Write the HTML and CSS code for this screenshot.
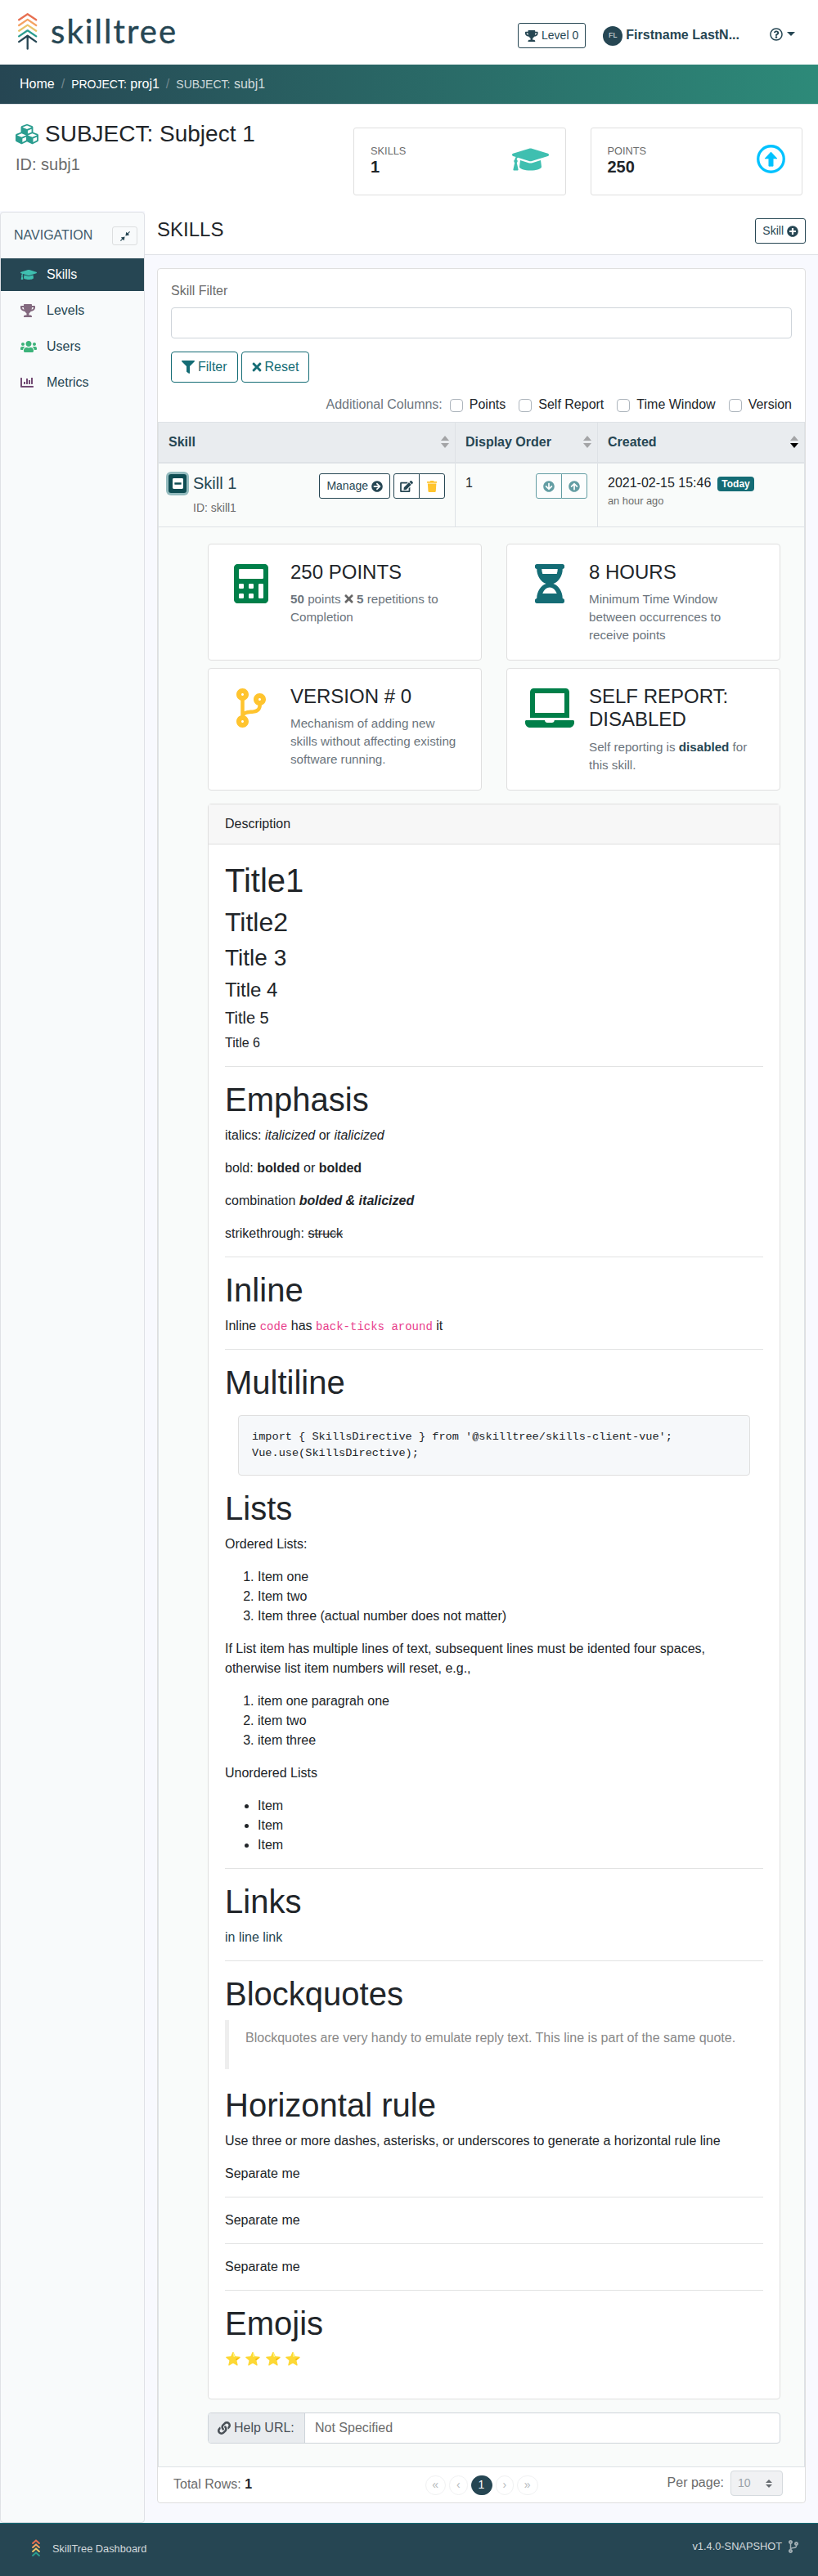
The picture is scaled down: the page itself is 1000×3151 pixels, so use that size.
FILE: index.html
```html
<!DOCTYPE html>
<html lang="en">
<head>
<meta charset="utf-8">
<title>SkillTree Dashboard</title>
<link rel="stylesheet" href="styles.css">
</head>
<body>
<svg class="sprite" width="0" height="0" aria-hidden="true">
  <symbol id="trophy" viewBox="0 0 576 512"><path d="M552 64H448V24c0-13.300-10.700-24-24-24H152c-13.300 0-24 10.700-24 24v40H24C10.700 64 0 74.700 0 88v56c0 35.700 22.500 72.400 61.900 100.700 31.500 22.700 69.800 37.100 110 41.700C203.300 338.500 240 360 240 360v72h-48c-35.300 0-64 20.700-64 56v12c0 6.600 5.400 12 12 12h296c6.600 0 12-5.400 12-12v-12c0-35.300-28.700-56-64-56h-48v-72s36.700-21.500 68.100-73.600c40.300-4.600 78.600-19 110-41.700 39.300-28.300 61.900-65 61.900-100.700V88c0-13.300-10.700-24-24-24zM99.300 192.800C74.900 175.200 64 155.600 64 144v-16h64.200c1 32.600 5.800 61.200 12.800 86.200-15.100-5.200-29.200-12.400-41.700-21.400zM512 144c0 16.100-17.700 36.100-35.300 48.800-12.500 9-26.700 16.200-41.800 21.400 7-25 11.800-53.600 12.800-86.200H512v16z"/></symbol>
  <symbol id="cap" viewBox="0 0 640 512"><path d="M622.340 153.200L343.400 67.500c-15.200-4.670-31.600-4.670-46.790 0L17.660 153.200c-23.540 7.230-23.540 38.360 0 45.590l48.630 14.940c-10.670 13.190-17.230 29.280-17.880 46.900C38.780 266.150 32 276.110 32 288c0 10.780 5.680 19.850 13.860 25.650L20.330 428.530C18.110 438.520 25.710 448 35.940 448h56.110c10.240 0 17.840-9.480 15.620-19.470L82.140 313.650C90.320 307.850 96 298.780 96 288c0-11.570-6.470-21.250-15.660-26.870.76-15.020 8.440-28.300 20.690-36.720L296.600 284.500c9.060 2.780 26.440 6.250 46.790 0l278.950-85.700c23.550-7.240 23.550-38.360 0-45.600zM352.790 315.090c-28.530 8.760-52.840 3.920-65.590 0l-145.020-44.550L128 384c0 35.350 85.960 64 192 64s192-28.650 192-64l-14.180-113.470-145.030 44.560z"/></symbol>
  <symbol id="users" viewBox="0 0 640 512"><path d="M96 224c35.300 0 64-28.700 64-64s-28.700-64-64-64-64 28.700-64 64 28.700 64 64 64zm448 0c35.300 0 64-28.700 64-64s-28.700-64-64-64-64 28.700-64 64 28.700 64 64 64zm32 32h-64c-17.600 0-33.500 7.100-45.100 18.600 40.300 22.100 68.900 62 75.100 109.400h66c17.700 0 32-14.300 32-32v-32c0-35.300-28.700-64-64-64zm-256 0c61.900 0 112-50.100 112-112S381.900 32 320 32 208 82.100 208 144s50.100 112 112 112zm76.800 32h-8.300c-20.800 10-43.900 16-68.500 16s-47.600-6-68.500-16h-8.300C179.600 288 128 339.600 128 403.200V432c0 26.500 21.500 48 48 48h288c26.500 0 48-21.500 48-48v-28.800c0-63.600-51.600-115.200-115.200-115.200zm-223.700-13.400C161.500 263.100 145.600 256 128 256H64c-35.300 0-64 28.700-64 64v32c0 17.700 14.300 32 32 32h65.900c6.300-47.400 34.900-87.300 75.200-109.400z"/></symbol>
  <symbol id="chart" viewBox="0 0 512 512"><path d="M332.800 320h38.400c6.400 0 12.800-6.400 12.800-12.800V172.800c0-6.400-6.400-12.800-12.800-12.800h-38.400c-6.400 0-12.800 6.400-12.800 12.800v134.400c0 6.400 6.400 12.800 12.800 12.800zm96 0h38.400c6.400 0 12.800-6.400 12.800-12.800V76.800c0-6.400-6.400-12.800-12.800-12.800h-38.400c-6.400 0-12.800 6.400-12.800 12.800v230.400c0 6.400 6.400 12.800 12.800 12.800zm-288 0h38.400c6.400 0 12.800-6.400 12.800-12.800v-70.400c0-6.400-6.400-12.800-12.800-12.800h-38.400c-6.400 0-12.800 6.400-12.800 12.800v70.400c0 6.400 6.400 12.800 12.800 12.800zm96 0h38.400c6.400 0 12.800-6.400 12.800-12.800V108.800c0-6.400-6.400-12.800-12.800-12.800h-38.400c-6.400 0-12.800 6.400-12.800 12.800v198.400c0 6.400 6.400 12.800 12.800 12.800zM496 384H64V80c0-8.840-7.160-16-16-16H16C7.160 64 0 71.160 0 80v336c0 17.670 14.330 32 32 32h464c8.840 0 16-7.160 16-16v-32c0-8.840-7.160-16-16-16z"/></symbol>
  <symbol id="filter" viewBox="0 0 512 512"><path d="M487.976 0H24.028C2.710 0-8.047 25.866 7.058 40.971L192 225.941V432c0 7.831 3.821 15.170 10.237 19.662l80 55.980C298.020 518.690 320 507.493 320 487.980V225.941l184.947-184.970C520.021 25.896 509.338 0 487.976 0z"/></symbol>
  <symbol id="times" viewBox="0 0 352 512"><path d="M242.720 256l100.070-100.070c12.280-12.280 12.280-32.190 0-44.480l-22.240-22.240c-12.280-12.280-32.190-12.280-44.480 0L176 189.280 75.930 89.210c-12.280-12.280-32.190-12.280-44.480 0L9.210 111.450c-12.280 12.280-12.280 32.190 0 44.480L109.280 256 9.210 356.070c-12.280 12.280-12.280 32.190 0 44.480l22.240 22.240c12.280 12.280 32.200 12.280 44.480 0L176 322.720l100.070 100.070c12.280 12.280 32.200 12.280 44.480 0l22.240-22.240c12.280-12.280 12.280-32.190 0-44.480L242.720 256z"/></symbol>
  <symbol id="question" viewBox="0 0 512 512"><path d="M256 8C119.043 8 8 119.083 8 256c0 136.997 111.043 248 248 248s248-111.003 248-248C504 119.083 392.957 8 256 8zm0 448c-110.532 0-200-89.431-200-200 0-110.495 89.472-200 200-200 110.491 0 200 89.471 200 200 0 110.530-89.431 200-200 200zm107.244-255.200c0 67.052-72.421 68.084-72.421 92.863V300c0 6.627-5.373 12-12 12h-45.647c-6.627 0-12-5.373-12-12v-8.659c0-35.745 27.100-50.034 47.579-61.516 17.561-9.845 28.324-16.541 28.324-29.579 0-17.246-21.999-28.693-39.784-28.693-23.189 0-33.894 10.977-48.942 29.969-4.057 5.120-11.460 6.071-16.666 2.124l-27.824-21.098c-5.107-3.872-6.251-11.066-2.644-16.363C184.846 131.491 214.940 112 261.794 112c49.071 0 101.450 38.304 101.450 88.800zM298 368c0 23.159-18.841 42-42 42s-42-18.841-42-42 18.841-42 42-42 42 18.841 42 42z"/></symbol>
  <symbol id="plus" viewBox="0 0 512 512"><path d="M256 8C119 8 8 119 8 256s111 248 248 248 248-111 248-248S393 8 256 8zm144 276c0 6.600-5.400 12-12 12h-92v92c0 6.600-5.400 12-12 12h-56c-6.600 0-12-5.400-12-12v-92h-92c-6.600 0-12-5.400-12-12v-56c0-6.600 5.400-12 12-12h92v-92c0-6.600 5.400-12 12-12h56c6.600 0 12 5.400 12 12v92h92c6.600 0 12 5.400 12 12v56z"/></symbol>
  <symbol id="arrow" viewBox="0 0 512 512"><path d="M256 8c137 0 248 111 248 248S393 504 256 504 8 393 8 256 119 8 256 8zm-28.900 143.600l75.500 72.400H120c-13.300 0-24 10.700-24 24v16c0 13.300 10.700 24 24 24h182.600l-75.500 72.400c-9.700 9.300-9.900 24.800-.4 34.300l11 10.900c9.400 9.400 24.600 9.400 33.900 0L404.300 273c9.400-9.400 9.400-24.600 0-33.900L271.600 106.300c-9.400-9.400-24.600-9.400-33.900 0l-11 10.900c-9.500 9.600-9.300 25.100.4 34.400z"/></symbol>
  <symbol id="edit" viewBox="0 0 576 512"><path d="M402.600 83.200l90.200 90.200c3.800 3.800 3.800 10 0 13.800L274.400 405.600l-92.800 10.300c-12.400 1.400-22.900-9.100-21.500-21.500l10.300-92.800L388.800 83.200c3.800-3.800 10-3.800 13.800 0zm162-22.900l-48.800-48.800c-15.200-15.200-39.900-15.200-55.200 0l-35.400 35.400c-3.800 3.800-3.800 10 0 13.800l90.200 90.200c3.800 3.800 10 3.800 13.800 0l35.400-35.400c15.200-15.300 15.200-40 0-55.200zM384 346.200V448H64V128h229.800c3.200 0 6.200-1.300 8.500-3.500l40-40c7.600-7.600 2.200-20.500-8.500-20.500H48C21.500 64 0 85.500 0 112v352c0 26.500 21.500 48 48 48h352c26.500 0 48-21.500 48-48V306.200c0-10.700-12.900-16-20.500-8.500l-40 40c-2.200 2.300-3.500 5.300-3.500 8.500z"/></symbol>
  <symbol id="trash" viewBox="0 0 448 512"><path d="M432 32H312l-9.400-18.700A24 24 0 0 0 281.100 0H166.800a23.720 23.720 0 0 0-21.400 13.300L136 32H16A16 16 0 0 0 0 48v32a16 16 0 0 0 16 16h416a16 16 0 0 0 16-16V48a16 16 0 0 0-16-16zM53.200 467a48 48 0 0 0 47.900 45h245.800a48 48 0 0 0 47.900-45L416 128H32z"/></symbol>
  <symbol id="minus" viewBox="0 0 448 512"><path d="M400 32H48C21.500 32 0 53.500 0 80v352c0 26.500 21.500 48 48 48h352c26.500 0 48-21.500 48-48V80c0-26.500-21.500-48-48-48zM92 296c-6.600 0-12-5.400-12-12v-56c0-6.600 5.400-12 12-12h264c6.600 0 12 5.400 12 12v56c0 6.600-5.400 12-12 12H92z"/></symbol>
  <symbol id="calculator" viewBox="0 0 448 512"><path fill-rule="evenodd" d="M400 0H48C22.400 0 0 22.400 0 48v416c0 25.600 22.400 48 48 48h352c25.600 0 48-22.400 48-48V48c0-25.600-22.400-48-48-48zM77 64h294q13 0 13 13v102q0 13-13 13H77q-13 0-13-13V77q0-13 13-13zM77 256h38q13 0 13 13v38q0 13-13 13H77q-13 0-13-13v-38q0-13 13-13zM205 256h38q13 0 13 13v38q0 13-13 13h-38q-13 0-13-13v-38q0-13 13-13zM77 384h38q13 0 13 13v38q0 13-13 13H77q-13 0-13-13v-38q0-13 13-13zM205 384h38q13 0 13 13v38q0 13-13 13h-38q-13 0-13-13v-38q0-13 13-13zM333 256h38q13 0 13 13v166q0 13-13 13h-38q-13 0-13-13V269q0-13 13-13z"/></symbol>
  <symbol id="hourglass" viewBox="0 0 384 512"><path d="M360 0H24C10.745 0 0 10.745 0 24v16c0 13.255 10.745 24 24 24 0 90.965 51.016 167.734 120.842 192C75.016 280.266 24 357.035 24 448c-13.255 0-24 10.745-24 24v16c0 13.255 10.745 24 24 24h336c13.255 0 24-10.745 24-24v-16c0-13.255-10.745-24-24-24 0-90.965-51.016-167.734-120.842-192C308.984 231.734 360 154.965 360 64c13.255 0 24-10.745 24-24V24c0-13.255-10.745-24-24-24zm-75.078 384H99.080c17.059-46.797 52.096-80 92.920-80 40.821 0 75.862 33.196 92.922 80zm.019-256H99.078C91.988 108.548 88 86.748 88 64h208c0 22.805-3.987 44.587-11.059 64z"/></symbol>
  <symbol id="branch" viewBox="0 0 384 512"><path d="M384 144c0-44.200-35.800-80-80-80s-80 35.800-80 80c0 36.400 24.300 67.100 57.500 76.800-.6 16.100-4.200 28.500-11 36.900-15.400 19.200-49.300 22.400-85.200 25.700-28.200 2.600-57.400 5.400-81.300 16.900v-144c32.500-10.200 56-40.500 56-76.300 0-44.200-35.800-80-80-80S0 35.800 0 80c0 35.800 23.500 66.100 56 76.300v199.300C23.500 365.900 0 396.200 0 432c0 44.200 35.800 80 80 80s80-35.800 80-80c0-34-21.200-63.100-51.200-74.600 3.100-5.200 7.800-9.800 14.900-13.400 16.200-8.200 40.400-10.400 66.100-12.800 42.200-3.900 90-8.400 118.200-43.400 14-17.400 21.100-39.800 21.600-67.900 31.600-10.800 54.400-40.700 54.400-75.900zM80 64c8.800 0 16 7.200 16 16s-7.200 16-16 16-16-7.200-16-16 7.200-16 16-16zm0 384c-8.800 0-16-7.200-16-16s7.200-16 16-16 16 7.200 16 16-7.200 16-16 16zm224-320c8.800 0 16 7.200 16 16s-7.200 16-16 16-16-7.200-16-16 7.200-16 16-16z"/></symbol>
  <symbol id="laptop" viewBox="0 0 640 512"><path d="M624 416H381.540c-.74 19.810-14.710 32-32.740 32H288c-18.690 0-33.020-17.470-32.770-32H16c-8.800 0-16 7.200-16 16v16c0 35.200 28.800 64 64 64h512c35.200 0 64-28.800 64-64v-16c0-8.800-7.200-16-16-16zM576 48c0-26.400-21.600-48-48-48H112C85.600 0 64 21.600 64 48v336h512V48zm-64 272H128V64h384v256z"/></symbol>
  <symbol id="link" viewBox="0 0 512 512"><path d="M326.612 185.391c59.747 59.809 58.927 155.698.36 214.590-.11.12-.24.25-.36.37l-67.200 67.200c-59.270 59.270-155.699 59.262-214.960 0-59.270-59.260-59.270-155.700 0-214.960l37.106-37.106c9.840-9.840 26.786-3.300 27.294 10.606.648 17.722 3.826 35.527 9.690 52.721 1.986 5.822.567 12.262-3.783 16.612l-13.087 13.087c-28.026 28.026-28.905 73.660-1.155 101.960 28.024 28.579 74.086 28.749 102.325.51l67.200-67.190c28.191-28.191 28.073-73.757 0-101.830-3.701-3.694-7.429-6.564-10.341-8.569a16.037 16.037 0 0 1-6.947-12.606c-.396-10.567 3.348-21.456 11.698-29.806l21.054-21.055c5.521-5.521 14.182-6.199 20.584-1.731a152.482 152.482 0 0 1 20.522 17.197zM467.547 44.449c-59.261-59.262-155.690-59.270-214.960 0l-67.200 67.200c-.12.12-.25.25-.36.37-58.566 58.892-59.387 154.781.36 214.590a152.454 152.454 0 0 0 20.521 17.196c6.402 4.468 15.064 3.789 20.584-1.731l21.054-21.055c8.350-8.350 12.094-19.239 11.698-29.806a16.037 16.037 0 0 0-6.947-12.606c-2.912-2.005-6.640-4.875-10.341-8.569-28.073-28.073-28.191-73.639 0-101.830l67.200-67.190c28.239-28.239 74.300-28.069 102.325.51 27.750 28.300 26.872 73.934-1.155 101.960l-13.087 13.087c-4.350 4.350-5.769 10.790-3.783 16.612 5.864 17.194 9.042 34.999 9.690 52.721.509 13.906 17.454 20.446 27.294 10.606l37.106-37.106c59.271-59.259 59.271-155.699.001-214.959z"/></symbol>
  <symbol id="cubes" viewBox="0 0 512 512"><path d="M488.600 250.200L392 214V105.500c0-15-9.300-28.400-23.400-33.700l-100-37.500c-8.100-3.100-17.100-3.100-25.300 0l-100 37.500c-14.100 5.300-23.400 18.700-23.400 33.700V214l-96.600 36.200C9.300 255.500 0 268.900 0 283.900V394c0 13.600 7.700 26.100 19.900 32.200l100 50c10.100 5.100 22.100 5.100 32.200 0l103.900-52 103.900 52c10.100 5.100 22.100 5.100 32.200 0l100-50c12.200-6.100 19.900-18.600 19.900-32.200V283.900c0-15-9.300-28.400-23.400-33.700zM358 214.800l-85 31.900v-68.200l85-37v73.300zM154 104.100l102-38.200 102 38.200v.6l-102 41.400-102-41.400v-.6zm84 291.100l-85 42.500v-79.100l85-38.800v75.400zm0-112l-102 41.400-102-41.400v-.6l102-38.200 102 38.200v.6zm240 112l-85 42.500v-79.100l85-38.800v75.400zm0-112l-102 41.400-102-41.400v-.6l102-38.200 102 38.200v.6z"/></symbol>
  <symbol id="up-circle" viewBox="0 0 34 34"><circle cx="17" cy="17" r="15.300" fill="none" stroke="currentColor" stroke-width="3.200"/><path d="M17 8.800l7.200 7.600h-4.700v9h-5v-9H9.800z" stroke="currentColor" stroke-width=".8" stroke-linejoin="round"/></symbol>
  <symbol id="compress" viewBox="0 0 12 12"><path d="M11.200 0l.8.8L9.800 3l1.400 1.600-4.800.9.900-4.700L9 2.200zM.8 12l-.8-.8L2.200 9 .8 7.400l4.800-.9-.9 4.700L3 9.800z"/></symbol>
  <symbol id="tree" viewBox="0 0 24 46"><g fill="none" stroke-width="2.300" stroke-linecap="round" stroke-linejoin="round"><path stroke="#e76f51" d="M1.200 8.300L11.700 1.200l10.500 7.100"/><path stroke="#f4a261" d="M1.200 15L11.700 7.900 22.200 15"/><path stroke="#e9c46a" d="M1.200 21.700l10.500-7.100 10.500 7.100"/><path stroke="#2a9d8f" d="M1.200 28.400l10.500-7.100 10.500 7.100"/><path stroke="#264653" d="M1.200 35.100l10.500-7.400 10.500 7.400M11.700 28v15.700"/></g></symbol>
  <symbol id="tree-small" viewBox="0 0 10 22"><g fill="none" stroke-width="2" stroke-linecap="round" stroke-linejoin="round"><path stroke="#e76f51" d="M1.100 5L5 1.400 8.900 5"/><path stroke="#f4a261" d="M1.100 10L5 6.400 8.900 10"/><path stroke="#e9c46a" d="M1.100 15L5 11.400 8.900 15"/><path stroke="#2a9d8f" d="M1.100 20L5 16.400 8.900 20"/></g></symbol>
</svg>

<header class="topbar">
  <div class="brand">
    <svg class="brand-tree"><use href="#tree"/></svg>
    <svg class="brand-name" width="156" height="50"><text x="0" y="37.300" textLength="153">skilltree</text></svg>
  </div>
  <div class="btn btn-sm level"><svg class="i trophy-sm"><use href="#trophy"/></svg>Level 0</div>
  <div class="user"><span class="avatar">FL</span><b>Firstname LastN...</b></div>
  <div class="help"><svg class="i w16"><use href="#question"/></svg><span class="caret"></span></div>
</header>
<nav class="crumbs">
  <span>Home</span><i>/</i><span><small>PROJECT:</small> proj1</span><i>/</i><span class="current"><small>SUBJECT:</small> subj1</span>
</nav>

<section class="subject">
  <div class="subject-name">
    <h2><svg class="cubes"><use href="#cubes"/></svg>SUBJECT: Subject 1</h2>
    <p>ID: subj1</p>
  </div>
  <div class="stat"><div><small>SKILLS</small><b>1</b></div><svg class="stat-cap"><use href="#cap"/></svg></div>
  <div class="stat"><div><small>POINTS</small><b>250</b></div><svg class="stat-up"><use href="#up-circle"/></svg></div>
</section>

<div class="layout">
  <aside class="sidebar">
    <div class="side-head"><span>NAVIGATION</span><span class="collapse"><svg><use href="#compress"/></svg></span></div>
    <ul class="menu">
      <li class="active"><svg class="i w20 c-teal"><use href="#cap"/></svg><span>Skills</span></li>
      <li><svg class="i w18 c-mauve"><use href="#trophy"/></svg><span>Levels</span></li>
      <li><svg class="i w20 c-green"><use href="#users"/></svg><span>Users</span></li>
      <li><svg class="i w16 c-plum"><use href="#chart"/></svg><span>Metrics</span></li>
    </ul>
  </aside>

  <main class="content">
    <div class="title-bar"><h4>SKILLS</h4><div class="btn btn-sm">Skill<svg class="i w14"><use href="#plus"/></svg></div></div>

    <div class="panel">
      <div class="filters">
        <label>Skill Filter</label>
        <div class="input"></div>
        <div class="filter-buttons">
          <div class="btn btn-teal"><svg class="i w16"><use href="#filter"/></svg>Filter</div>
          <div class="btn btn-teal"><svg class="i w12"><use href="#times"/></svg>Reset</div>
        </div>
        <div class="columns">
          <span class="muted">Additional Columns:</span>
          <span class="check"><i></i>Points</span>
          <span class="check"><i></i>Self Report</span>
          <span class="check"><i></i>Time Window</span>
          <span class="check"><i></i>Version</span>
        </div>
      </div>

      <div class="table">
        <div class="tr head">
          <div class="td"><b>Skill</b><span class="sort"></span></div>
          <div class="td"><b>Display Order</b><span class="sort"></span></div>
          <div class="td"><b>Created</b><span class="sort desc"></span></div>
        </div>
        <div class="tr">
          <div class="td">
            <div class="skill">
              <span class="toggle"><svg class="i"><use href="#minus"/></svg></span>
              <div><h5>Skill 1</h5><small>ID: skill1</small></div>
            </div>
            <div class="actions">
              <div class="btn btn-sm">Manage<svg class="i w14"><use href="#arrow"/></svg></div>
              <div class="group">
                <div class="btn btn-sm"><svg class="i w16"><use href="#edit"/></svg></div>
                <div class="btn btn-sm"><svg class="i w13 c-amber"><use href="#trash"/></svg></div>
              </div>
            </div>
          </div>
          <div class="td">
            <span>1</span>
            <div class="group order">
              <div class="btn btn-sm btn-teal"><svg class="i w14 down"><use href="#arrow"/></svg></div>
              <div class="btn btn-sm btn-teal"><svg class="i w14 up"><use href="#arrow"/></svg></div>
            </div>
          </div>
          <div class="td">
            <div class="created"><span>2021-02-15 15:46</span><em>Today</em><small>an hour ago</small></div>
          </div>
        </div>

        <div class="detail">
          <div class="cards">
            <div class="card"><div class="card-icon"><svg class="big w42 c-forest"><use href="#calculator"/></svg></div><div><h4>250 POINTS</h4><p><b>50</b> points <svg class="i w11"><use href="#times"/></svg> <b>5</b> repetitions to Completion</p></div></div>
            <div class="card"><div class="card-icon"><svg class="big w36 c-deep"><use href="#hourglass"/></svg></div><div><h4>8 HOURS</h4><p>Minimum Time Window between occurrences to receive points</p></div></div>
            <div class="card"><div class="card-icon"><svg class="big w36 c-amber"><use href="#branch"/></svg></div><div><h4>VERSION # 0</h4><p>Mechanism of adding new skills without affecting existing software running.</p></div></div>
            <div class="card"><div class="card-icon"><svg class="big w60 c-forest"><use href="#laptop"/></svg></div><div><h4>SELF REPORT: DISABLED</h4><p>Self reporting is <b class="navy">disabled</b> for this skill.</p></div></div>
          </div>

          <article class="description">
            <div class="description-head">Description</div>
            <div class="markdown">
              <h1>Title1</h1>
              <h2>Title2</h2>
              <h3>Title 3</h3>
              <h4>Title 4</h4>
              <h5>Title 5</h5>
              <h6>Title 6</h6>
              <hr>
              <h1>Emphasis</h1>
              <p>italics: <em>italicized</em> or <em>italicized</em></p>
              <p>bold: <strong>bolded</strong> or <strong>bolded</strong></p>
              <p>combination <strong><em>bolded &amp; italicized</em></strong></p>
              <p>strikethrough: <del>struck</del></p>
              <hr>
              <h1>Inline</h1>
              <p>Inline <code>code</code> has <code>back-ticks around</code> it</p>
              <hr>
              <h1>Multiline</h1>
              <pre>import { SkillsDirective } from '@skilltree/skills-client-vue';
Vue.use(SkillsDirective);</pre>
              <h1>Lists</h1>
              <p>Ordered Lists:</p>
              <ol><li>Item one</li><li>Item two</li><li>Item three (actual number does not matter)</li></ol>
              <p>If List item has multiple lines of text, subsequent lines must be idented four spaces, otherwise list item numbers will reset, e.g.,</p>
              <ol><li>item one paragrah one</li><li>item two</li><li>item three</li></ol>
              <p>Unordered Lists</p>
              <ul><li>Item</li><li>Item</li><li>Item</li></ul>
              <hr>
              <h1>Links</h1>
              <p><a>in line link</a></p>
              <hr>
              <h1>Blockquotes</h1>
              <blockquote><p>Blockquotes are very handy to emulate reply text. This line is part of the same quote.</p></blockquote>
              <h1>Horizontal rule</h1>
              <p>Use three or more dashes, asterisks, or underscores to generate a horizontal rule line</p>
              <p>Separate me</p>
              <hr>
              <p>Separate me</p>
              <hr>
              <p>Separate me</p>
              <hr>
              <h1>Emojis</h1>
              <p>⭐ ⭐ ⭐ ⭐</p>
            </div>
          </article>

          <div class="help-url"><span class="addon"><svg class="i w16"><use href="#link"/></svg>Help URL:</span><span class="value">Not Specified</span></div>
        </div>
      </div>

      <div class="pager">
        <div class="total">Total Rows: <b>1</b></div>
        <div class="pages"><span class="wide">«</span><span>‹</span><span class="on">1</span><span>›</span><span class="wide">»</span></div>
        <div class="per-page"><span>Per page:</span><span class="select">10<svg width="8" height="10" viewBox="0 0 8 10"><path d="M4 0l4 4H0zM0 6h8l-4 4z"/></svg></span></div>
      </div>
    </div>
  </main>
</div>

<footer class="footer">
  <div><svg class="footer-tree"><use href="#tree-small"/></svg>SkillTree Dashboard</div>
  <div class="version">v1.4.0-SNAPSHOT<svg class="i w12"><use href="#branch"/></svg></div>
</footer>
</body>
</html>
```
FILE: styles.css
```css
*, *::before, *::after { box-sizing: border-box; }
body {
  margin: 0;
  background: #fff;
  color: #212529;
  font: 16px/1.5 "Liberation Sans", Arial, sans-serif;
}
h1, h2, h3, h4, h5, h6 { margin: 0 0 8px; font-weight: 400; line-height: 1.2; }
h1 { font-size: 40px; }
h2 { font-size: 32px; }
h3 { font-size: 28px; }
h4 { font-size: 24px; }
h5 { font-size: 20px; }
h6 { font-size: 16px; }
p { margin: 0 0 16px; }
svg { fill: currentColor; flex: none; }
.sprite { display: block; }

/* icons */
.i { height: 16px; vertical-align: -2px; }
.w11 { width: 11px; }
.w12 { width: 12px; }
.w13 { width: 12.250px; }
.w14 { width: 14px; }
.w16 { width: 16px; }
.w18 { width: 18px; }
.w20 { width: 20px; }
.big { height: 48px; }
.w36 { width: 36px; }
.w42 { width: 42px; }
.w60 { width: 60px; }
.down { transform: rotate(90deg); }
.up { transform: rotate(-90deg); }
.c-teal { color: #3fbfb0; }
.c-mauve { color: #83697f; }
.c-green { color: #3cb37a; }
.c-plum { color: #714a73; }
.c-amber { color: #ffc42e; }
.c-forest { color: #007f49; }
.c-deep { color: #146c75; }
.navy { color: #264653; }
.muted { color: #6c757d; }

/* buttons */
.btn {
  display: flex;
  flex: none;
  align-items: center;
  gap: 4px;
  height: 38px;
  padding: 0 12px;
  border: 1px solid #264653;
  border-radius: 4px;
  background: #fff;
  color: #264653;
  white-space: nowrap;
}
.btn-sm { height: 31px; padding: 0 8px; border-radius: 3px; font-size: 14px; }
.btn-sm .i { height: 14px; }
.btn-teal { border-color: #146c75; color: #146c75; }
.group { display: flex; }
.group .btn:first-child { border-radius: 3px 0 0 3px; }
.group .btn:last-child { margin-left: -1px; border-radius: 0 3px 3px 0; }

/* header */
.topbar { display: flex; align-items: center; height: 79px; padding: 8px 28px 0 22px; color: #264653; }
.brand { display: flex; align-items: flex-start; align-self: flex-start; margin: 8px auto 0 0; }
.brand-tree { width: 24px; height: 46px; }
.brand-name {
  margin-left: 16px;
  overflow: visible;
  font: 40px Lato, sans-serif;
  stroke: currentColor;
  stroke-width: .4px;
  stroke-linejoin: round;
}
.level { width: 83px; }
.trophy-sm { width: 15.750px; }
.user { display: flex; align-items: center; gap: 4px; margin-left: 21px; white-space: nowrap; }
.user b { margin-top: -2px; }
.avatar {
  display: flex;
  align-items: center;
  justify-content: center;
  width: 24px;
  height: 24px;
  border-radius: 50%;
  background: #264653;
  color: #e0e5e7;
  font-size: 9px;
}
.help { display: flex; align-items: center; margin: -4px 0 0 37px; }
.caret { width: 0; margin-left: 5px; border: 5px solid transparent; border-top-color: currentColor; border-bottom: 0; }
.crumbs {
  display: flex;
  align-items: center;
  height: 49px;
  padding: 0 24px 1px;
  border-bottom: 1px solid #dee2e6;
  background: linear-gradient(90deg, #264653, #2d8a79);
  color: #fff;
}
.crumbs i { padding: 0 8px; color: #71868d; font-style: normal; }
.crumbs small { font-size: 14px; }
.crumbs .current { color: #d0dadb; }

/* subject summary */
.subject { display: flex; height: 130px; padding: 28px 19px 0; }
.subject-name { width: 413px; }
.subject-name h2 { display: flex; align-items: center; gap: 8px; margin: -9px 0 0; font-size: 28px; line-height: 34px; }
.cubes { width: 28px; height: 28px; color: #2a9d8f; }
.subject-name p { margin: 5px 0 0; color: #6c6c6c; font-size: 20px; line-height: 30px; }
.stat {
  display: flex;
  align-items: center;
  justify-content: space-between;
  flex: 1;
  height: 83px;
  padding: 0 20px;
  border: 1px solid #dfdfdf;
  border-radius: 3px;
}
.stat + .stat { margin-left: 30px; }
.stat > div { margin-top: -3px; }
.stat small { display: block; margin-top: -3px; color: #6c6c6c; font-size: 12.8px; line-height: 19px; }
.stat b { display: block; font-size: 20px; line-height: 20px; }
.stat-cap { width: 45px; height: 36px; margin-top: -6px; color: #3fbfb0; }
.stat-up { width: 35px; height: 35px; margin-top: -6px; color: #00c2ff; }

/* layout */
.layout { display: flex; height: 2828px; background: #f8f9fe; }
.sidebar { width: 177px; margin-top: 1px; border: 1px solid #dfe1e6; border-radius: 4px; background: #f8fafb; }
.side-head { display: flex; align-items: center; justify-content: space-between; height: 56px; padding: 1px 8px 0 16px; color: #3f5a6c; }
.side-head > span:first-child { margin-top: -1px; }
.collapse { display: flex; align-items: center; justify-content: center; width: 31px; height: 23px; border: 1px solid #dcdedf; border-radius: 3px; color: #264653; }
.collapse svg { width: 12px; height: 12px; }
.menu { margin: 0; padding: 0; list-style: none; color: #264653; }
.menu li { display: flex; align-items: center; height: 40px; margin-bottom: 4px; padding: 0 0 1px 24px; }
.menu .w20 { margin-right: 12px; }
.menu .w18 { margin-right: 14px; }
.menu .w16 { margin-right: 16px; }
.menu .active { background: #264653; color: #fff; }
.content { flex: 1; }
.title-bar { display: flex; align-items: center; justify-content: space-between; height: 54px; padding: 0 15px; border-bottom: 1px solid #dfe1e6; background: #fff; }
.title-bar h4 { margin: -7px 0 0; }
.title-bar .btn { margin-top: -4px; }
.panel { margin: 16px 15px 0; border: 1px solid #dfdfdf; border-radius: 4px; background: #fff; }

/* filters */
.filters { height: 187px; padding: 15px 16px 0; }
.filters label { display: block; color: #6c6c6c; line-height: 24px; }
.input { height: 38px; margin-top: 8px; border: 1px solid #ced4da; border-radius: 4px; }
.filter-buttons { display: flex; gap: 4px; margin-top: 16px; }
.columns { display: flex; align-items: center; justify-content: flex-end; margin-top: 15px; }
.check { display: flex; align-items: center; margin-left: 16px; }
.muted + .check { margin-left: 9px; }
.check i { width: 16px; height: 16px; margin: 2px 8px 0 0; border: 1px solid #adb5bd; border-radius: 4px; }

/* table */
.table { border: solid #dee2e6; border-width: 1px 1px 0 1px; background: #f9fbfa; }
.tr { display: grid; grid-template-columns: 363px 174px 1fr; height: 78px; border-bottom: 1px solid #dee2e6; }
.tr.head { height: 50px; border-bottom-width: 2px; background: #e9ecef; color: #264653; }
.td { display: flex; align-items: flex-start; justify-content: space-between; padding: 12px; border-right: 1px solid #dee2e6; }
.td:last-child { border-right: 0; }
.head .td { align-items: center; padding: 0 7px 1px 12px; }
.sort::before, .sort::after { content: ""; display: block; border: 5px solid transparent; }
.sort::before { border-top: 0; border-bottom: 6px solid #a3a4a6; }
.sort::after { margin-top: 3px; border-bottom: 0; border-top: 6px solid #a3a4a6; }
.sort.desc::after { border-top-color: #000; }
.skill { display: flex; gap: 8px; }
.toggle {
  display: flex;
  align-items: center;
  justify-content: center;
  width: 22px;
  height: 23px;
  margin-top: 1px;
  border-radius: 3px;
  background: #0f4d53;
  box-shadow: 0 0 0 3px #94bbbe;
  color: #fff;
}
.toggle .i { width: 13px; height: 15px; }
.skill h5 { margin: 0; color: #264653; font-size: 20px; line-height: 24px; }
.skill small { display: block; margin-top: 8px; color: #6c6c6c; font-size: 14px; line-height: 21px; }
.actions { display: flex; gap: 4px; }
.td .group .btn { justify-content: center; width: 32px; padding: 0; }
.order { opacity: .65; }
.created { line-height: 24px; }
.created em {
  display: inline-block;
  margin-left: 8px;
  padding: 0 5px;
  border-radius: 4px;
  background: #146c75;
  color: #fff;
  font: bold 12px/18px "Liberation Sans", Arial, sans-serif;
  vertical-align: 0;
}
.created small { display: block; color: #6c6c6c; font-size: 12.8px; line-height: 20px; }

/* expanded row */
.detail { height: 2373px; padding: 20px 29px 0 60px; border-bottom: 1px solid #dee2e6; }
.cards { display: grid; grid-template-columns: 1fr 1fr; gap: 9px 30px; grid-template-rows: 143px 150px; }
.card { display: flex; gap: 17px; padding: 19.500px 20px; border: 1px solid #dfdfdf; border-radius: 4px; background: #fff; }
.card-icon { display: flex; flex: none; align-items: flex-start; justify-content: center; width: 63px; padding-top: 4.500px; }
.card p { margin: 0; color: #6c757d; font-size: 15.200px; line-height: 22px; }
.card p .i { height: 15px; color: #666; }
.description { height: 1952px; margin-top: 16px; border: 1px solid #dfdfdf; border-radius: 4px; background: #fff; }
.description-head { height: 49px; padding: 12px 20px; border-bottom: 1px solid #dfdfdf; background: #f7f7f7; }
.markdown { padding: 20px; }
.markdown h5 { position: relative; top: -1px; }
.markdown h6 { margin-bottom: 19px; }
.markdown h6 + hr { margin-top: 0; }
hr { height: 1px; margin: 16px 0; border: 0; background: #e2e3e3; }
.markdown ol, .markdown ul { margin: 0 0 16px; padding-left: 40px; }
.markdown a { color: #264653; }
code { color: #e83e8c; font: 14px "Liberation Mono", monospace; }
pre { margin: 16px; padding: 16px 16px 17px; border: 1px solid #dfdfdf; border-radius: 4px; background: #f6f8fa; font: 13.600px/19.700px "Liberation Mono", monospace; }
blockquote { margin: 0 0 20px; padding: 10px 20px; border-left: 5px solid #eee; color: #888; }
.help-url { display: flex; height: 38px; margin-top: 16px; border: 1px solid #ced4da; border-radius: 4px; background: #fff; line-height: 36px; }
.addon { display: flex; align-items: center; gap: 4px; width: 118px; padding-left: 11px; border-right: 1px solid #ced4da; border-radius: 3px 0 0 3px; background: #e9ecef; color: #495057; }
.value { padding-left: 12px; color: #6c6c6c; }

/* pagination */
.pager { display: grid; grid-template-columns: 1fr auto 1fr; align-items: center; height: 43px; padding: 0 27px; color: #6c6c6c; }
.total b { color: #212529; }
.total { margin: -2px 0 0 -8px; }
.pages { display: flex; gap: 4px; }
.pages span {
  display: flex;
  align-items: center;
  justify-content: center;
  width: 22.500px;
  height: 24px;
  border: 1px solid #f0f1f2;
  border-radius: 12px;
  color: #b5b9bc;
  font-size: 14px;
}
.pages .wide { width: 25.500px; }
.pages .on { width: 26px; border-color: #264653; background: #264653; color: #fff; }
.per-page { display: flex; align-items: center; justify-content: flex-end; gap: 8px; margin-top: -4px; }
.per-page > span:first-child { margin-top: -1px; }
.select { display: flex; align-items: center; justify-content: space-between; width: 64px; height: 31px; padding: 0 12px 0 8px; border: 1px solid #d5dade; border-radius: 4px; background: #f0f1f3; color: #9aa1a7; font-size: 14px; }
.select svg { color: #666b70; }

/* footer */
.footer { display: flex; justify-content: space-between; height: 65px; padding: 18px 24px 0 39px; border-top: 1px solid #146c75; background: #264653; color: #d4dadd; font-size: 12.800px; line-height: 26px; }
.footer > div { display: flex; align-items: center; height: 26px; }
.footer-tree { width: 10px; height: 22px; margin: -3px 15px 0 0; }
.footer .version { gap: 8px; margin-top: -3px; }
.version .i { color: #a0adb3; }
```
